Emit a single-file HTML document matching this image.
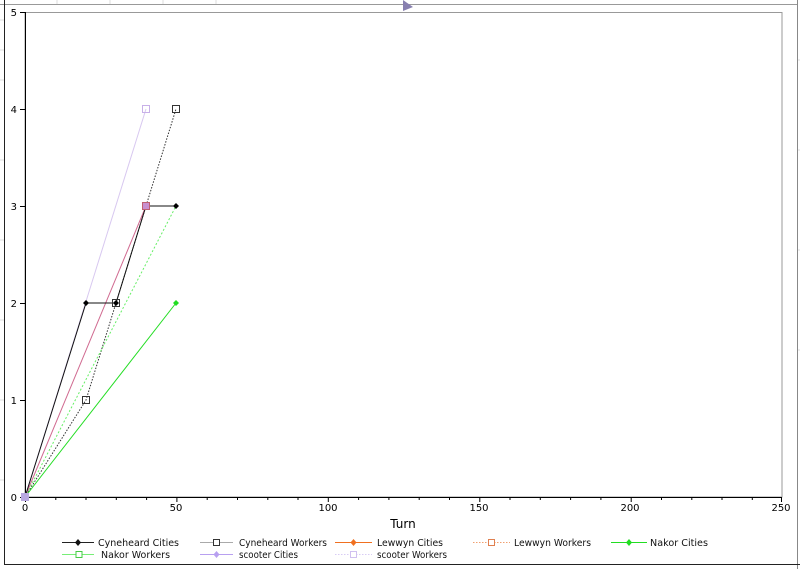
<!DOCTYPE html>
<html><head><style>
body{margin:0;background:#fff;}
svg{display:block;font-family:"DejaVu Sans","Liberation Sans",sans-serif;}
</style></head><body>
<svg width="800" height="569" viewBox="0 0 800 569" xmlns="http://www.w3.org/2000/svg">
<rect width="800" height="569" fill="#fff"/>
<g stroke="#ddd" stroke-width="1">
<line x1="57" y1="0" x2="57" y2="4"/><line x1="110" y1="0" x2="110" y2="4"/><line x1="163" y1="0" x2="163" y2="4"/><line x1="216" y1="0" x2="216" y2="4"/>
<line x1="0" y1="20" x2="4" y2="20"/><line x1="0" y1="50" x2="4" y2="50"/><line x1="0" y1="80" x2="4" y2="80"/><line x1="0" y1="160" x2="4" y2="160"/><line x1="0" y1="240" x2="4" y2="240"/><line x1="0" y1="320" x2="4" y2="320"/><line x1="0" y1="400" x2="4" y2="400"/><line x1="0" y1="480" x2="4" y2="480"/>
<line x1="797" y1="60" x2="800" y2="60"/><line x1="797" y1="150" x2="800" y2="150"/><line x1="797" y1="250" x2="800" y2="250"/><line x1="797" y1="350" x2="800" y2="350"/>
</g>
<line x1="0" y1="4.5" x2="797" y2="4.5" stroke="#999"/>
<line x1="4.5" y1="0" x2="4.5" y2="565" stroke="#222"/>
<line x1="797.5" y1="0" x2="797.5" y2="569" stroke="#888"/>
<line x1="4" y1="564.5" x2="800" y2="564.5" stroke="#222"/>
<rect x="25" y="12.5" width="757" height="484.5" fill="#fff" stroke="#999"/>
<line x1="25.5" y1="12" x2="25.5" y2="497" stroke="#000"/>
<line x1="25" y1="497.5" x2="782" y2="497.5" stroke="#000"/>
<g stroke="#000"><line x1="20" y1="12.5" x2="25" y2="12.5"/><line x1="20" y1="109.5" x2="25" y2="109.5"/><line x1="20" y1="206.5" x2="25" y2="206.5"/><line x1="20" y1="303.5" x2="25" y2="303.5"/><line x1="20" y1="400.5" x2="25" y2="400.5"/><line x1="20" y1="497.5" x2="25" y2="497.5"/></g>
<g font-size="10" fill="#000" text-anchor="end">
<text x="17" y="16">5</text><text x="17" y="113">4</text><text x="17" y="210">3</text><text x="17" y="307">2</text><text x="17" y="404">1</text><text x="17" y="501">0</text></g>
<g font-size="10" fill="#000" text-anchor="middle">
<text x="25" y="511">0</text><text x="176" y="511">50</text><text x="328" y="511">100</text><text x="479" y="511">150</text><text x="630" y="511">200</text><text x="781" y="511">250</text></g>
<text x="403" y="528" font-size="12" text-anchor="middle">Turn</text>
<g stroke="#000" stroke-width="1">
<path d="M25.5 497v5M55.8 497v3M86 497v3M116.3 497v3M146.6 497v3M176.9 497v5M207.2 497v3M237.5 497v3M267.8 497v3M298 497v3M328.3 497v5M358.6 497v3M388.9 497v3M419.2 497v3M449.5 497v3M479.8 497v5M510 497v3M540.3 497v3M570.6 497v3M600.9 497v3M631.2 497v5M661.5 497v3M691.8 497v3M722 497v3M752.3 497v3M781.5 497v5"/>
</g>
<polyline points="25,497 146,109" fill="none" stroke="#d8c8f0"/>
<polyline points="25,497 86,400 116,303 146,206 176,109" fill="none" stroke="#333" stroke-dasharray="1.5,1.5"/>
<polyline points="25,497 176,206" fill="none" stroke="#66ee66" stroke-dasharray="2,2"/>
<polyline points="25,497 176,303" fill="none" stroke="#22dd22"/>
<polyline points="25,497 146,206" fill="none" stroke="#d06a90"/>
<polyline points="25,497 86,303 116,303 146,206 176,206" fill="none" stroke="#111"/>
<g fill="#000"><path d="M86 300l3 3-3 3-3-3z"/><path d="M116 300l3 3-3 3-3-3z"/><path d="M176 203l3 3-3 3-3-3z"/></g>
<path d="M176 300l3 3-3 3-3-3z" fill="#22dd22"/>
<g fill="none" stroke="#333"><rect x="82.5" y="396.5" width="7" height="7"/><rect x="112.5" y="299.5" width="7" height="7"/><rect x="172.5" y="105.5" width="7" height="7"/></g>
<rect x="142.5" y="105.5" width="7" height="7" fill="none" stroke="#c8b0e8"/>
<rect x="142.5" y="202.5" width="7" height="7" fill="#c890d0" stroke="#c06070"/>
<rect x="21" y="493" width="8" height="8" fill="#b8a8e0"/>
<path d="M403 0l10 7-10 4z" fill="#8880b0"/>
<g font-size="10" fill="#111">
<line x1="62" y1="542.5" x2="94" y2="542.5" stroke="#222"/><path d="M78 539l3 3.5-3 3.5-3-3.5z"/><text x="98" y="546" textLength="81" lengthAdjust="spacingAndGlyphs">Cyneheard Cities</text>
<line x1="200" y1="542.5" x2="233" y2="542.5" stroke="#aaa"/><rect x="213.5" y="539.5" width="6" height="6" fill="#fff" stroke="#333"/><text x="239" y="546" textLength="88" lengthAdjust="spacingAndGlyphs">Cyneheard Workers</text>
<line x1="335" y1="542.5" x2="372" y2="542.5" stroke="#f07020"/><path d="M353.5 539l3 3.5-3 3.5-3-3.5z" fill="#f07020"/><text x="377" y="546" textLength="66" lengthAdjust="spacingAndGlyphs">Lewwyn Cities</text>
<line x1="473" y1="542.5" x2="510" y2="542.5" stroke="#f0a070" stroke-dasharray="1.5,1.5"/><rect x="488.5" y="539.5" width="6" height="6" fill="#fff" stroke="#e08050"/><text x="514" y="546" textLength="77" lengthAdjust="spacingAndGlyphs">Lewwyn Workers</text>
<line x1="611" y1="542.5" x2="647" y2="542.5" stroke="#22dd22"/><path d="M629 539l3 3.5-3 3.5-3-3.5z" fill="#22dd22"/><text x="650" y="546" textLength="58" lengthAdjust="spacingAndGlyphs">Nakor Cities</text>
<line x1="62" y1="554.5" x2="94" y2="554.5" stroke="#77ee77"/><rect x="76" y="551.5" width="6" height="6" fill="#fff" stroke="#44cc44"/><text x="101" y="558" textLength="69" lengthAdjust="spacingAndGlyphs">Nakor Workers</text>
<line x1="200" y1="554.5" x2="233" y2="554.5" stroke="#b8a0f0"/><path d="M216.5 551l3 3.5-3 3.5-3-3.5z" fill="#b8a0f0"/><text x="239" y="558" textLength="59" lengthAdjust="spacingAndGlyphs">scooter Cities</text>
<line x1="335" y1="554.5" x2="372" y2="554.5" stroke="#d8ccf4" stroke-dasharray="1.5,1.5"/><rect x="350.5" y="551.5" width="6" height="6" fill="#fff" stroke="#d0c0f0"/><text x="377" y="558" textLength="70" lengthAdjust="spacingAndGlyphs">scooter Workers</text>
</g>
</svg>
</body></html>
